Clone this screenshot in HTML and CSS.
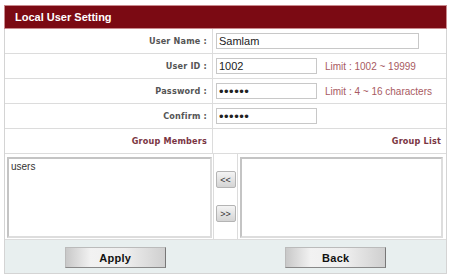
FILE: index.html
```html
<!DOCTYPE html>
<html lang="en">
<head>
  <meta charset="UTF-8">
  <title>Local User Setting</title>
  <link rel="stylesheet" href="styles.css">
</head>
<body>
  <div class="panel">
    <div class="head">Local User Setting</div>
    <div class="row">
      <div class="label">User Name :</div>
      <div class="value"><input type="text" class="wide" value="Samlam"></div>
    </div>
    <div class="row">
      <div class="label">User ID :</div>
      <div class="value"><input type="text" class="short" value="1002"><span class="hint">Limit : 1002 ~ 19999</span></div>
    </div>
    <div class="row">
      <div class="label">Password :</div>
      <div class="value"><input type="password" class="short" value="123456"><span class="hint">Limit : 4 ~ 16 characters</span></div>
    </div>
    <div class="row">
      <div class="label">Confirm :</div>
      <div class="value"><input type="password" class="short" value="123456"></div>
    </div>
    <div class="row">
      <div class="label group">Group Members</div>
      <div class="value group right">Group List</div>
    </div>
    <div class="lists">
      <div class="cell"><div class="box">users</div></div>
      <div class="mid">
        <button class="move">&lt;&lt;</button>
        <button class="move">&gt;&gt;</button>
      </div>
      <div class="cell right-cell"><div class="box"></div></div>
    </div>
    <div class="actions">
      <div class="act"><button class="btn">Apply</button></div>
      <div class="act"><button class="btn">Back</button></div>
    </div>
  </div>
</body>
</html>
```

FILE: styles.css
```css
body { margin: 0; background: #fff; font-family: "Liberation Sans", Arial, sans-serif; }
.panel { width: 443px; margin: 5px 0 0 4px; border: 1px solid #d4d4d4; border-top: none; box-sizing: border-box; }
.head { height: 24px; margin: 0 -1px; background: #7b0a13; border: 1px solid #c98a8e; box-sizing: border-box; color: #fff; font-size: 11px; font-weight: bold; line-height: 22px; padding-left: 10px; }
.row { display: grid; grid-template-columns: 208px 1fr; height: 25px; border-bottom: 1px solid #dcdcdc; box-sizing: border-box; }
.label { border-right: 1px solid #dcdcdc; text-align: right; padding-right: 5px; font-family: "DejaVu Sans Condensed", "Liberation Sans", Arial, sans-serif; font-size: 9px; font-weight: bold; color: #555; letter-spacing: 0.2px; line-height: 24px; }
.value { display: flex; align-items: center; padding-left: 3px; }
input { height: 16px; box-sizing: border-box; border: 1px solid #c8c8c8; font-family: "Liberation Sans", Arial, sans-serif; font-size: 11px; padding: 0 2px; margin: 0; color: #222; }
input[type=password] { font-size: 13px; letter-spacing: 0.5px; }
.wide { width: 203px; }
.short { width: 101px; }
.hint { margin-left: 8px; font-size: 10px; color: #a85a62; }
.group { color: #7a3543; letter-spacing: 0.2px; }
.right { justify-content: flex-end; padding-right: 5px; font-family: "DejaVu Sans Condensed", "Liberation Sans", Arial, sans-serif; font-size: 9px; font-weight: bold; }
.lists { display: grid; grid-template-columns: 208px 25px 1fr; height: 86px; border-bottom: 1px solid #dcdcdc; box-sizing: border-box; }
.cell { padding: 3px 1px 0 2px; }
.right-cell { padding: 3px 3px 0 2px; }
.box { height: 81px; box-sizing: border-box; border: 2px solid #c4c4c4; border-right-color: #ddd; border-bottom-color: #ddd; background: #fff; font-size: 10px; color: #333; padding: 2px 2px; }
.mid { border-left: 1px solid #dcdcdc; border-right: 1px solid #dcdcdc; display: flex; flex-direction: column; align-items: center; padding-top: 17px; gap: 17px; }
.move { width: 20px; height: 17px; padding: 0; border: 1px solid #b4b4b4; border-radius: 2px; background: linear-gradient(#f4f4f4, #d4d4d4); font-family: "Liberation Sans", Arial, sans-serif; font-size: 9px; color: #333; }
.actions { display: grid; grid-template-columns: 1fr 1fr; height: 33px; background: #e8efef; }
.act { display: flex; align-items: center; justify-content: center; }
.btn { width: 101px; height: 21px; margin-top: 2px; padding: 0; border: 1px solid #bbb; border-right-color: #777; border-bottom-color: #888; background: linear-gradient(90deg, #c8c8c8, #f2f2f2 25%, #eee 60%, #cfcfcf); font-family: "Liberation Sans", Arial, sans-serif; font-size: 11px; font-weight: bold; letter-spacing: 0.3px; color: #111; }
```
